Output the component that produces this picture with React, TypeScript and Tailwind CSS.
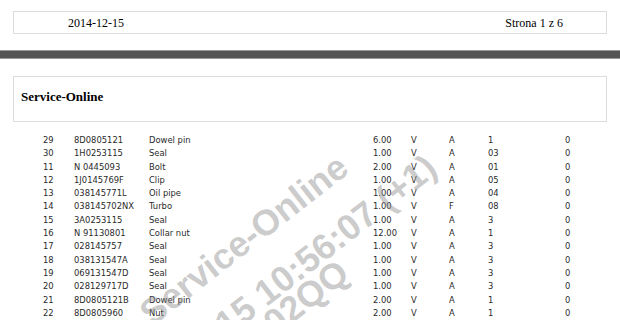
const rows = [
  ['29', '8D0805121', 'Dowel pin', '6.00', 'V', 'A', '1', '0'],
  ['30', '1H0253115', 'Seal', '1.00', 'V', 'A', '03', '0'],
  ['11', 'N 0445093', 'Bolt', '2.00', 'V', 'A', '01', '0'],
  ['12', '1J0145769F', 'Clip', '1.00', 'V', 'A', '05', '0'],
  ['13', '038145771L', 'Oil pipe', '1.00', 'V', 'A', '04', '0'],
  ['14', '038145702NX', 'Turbo', '1.00', 'V', 'F', '08', '0'],
  ['15', '3A0253115', 'Seal', '1.00', 'V', 'A', '3', '0'],
  ['16', 'N 91130801', 'Collar nut', '12.00', 'V', 'A', '1', '0'],
  ['17', '028145757', 'Seal', '1.00', 'V', 'A', '3', '0'],
  ['18', '038131547A', 'Seal', '1.00', 'V', 'A', '3', '0'],
  ['19', '069131547D', 'Seal', '1.00', 'V', 'A', '3', '0'],
  ['20', '028129717D', 'Seal', '1.00', 'V', 'A', '3', '0'],
  ['21', '8D0805121B', 'Dowel pin', '2.00', 'V', 'A', '1', '0'],
  ['22', '8D0805960', 'Nut', '2.00', 'V', 'A', '1', '0'],
]

// diagonal "Service-Online" stamp laid over the listing
function Watermark() {
  const line =
    'absolute whitespace-nowrap font-["Liberation_Sans",Arial,sans-serif] text-[36px] font-bold leading-none text-[rgba(140,140,140,0.45)] -translate-x-1/2 -translate-y-1/2 -rotate-[38deg]'
  return (
    <div className="pointer-events-none absolute inset-0 overflow-hidden">
      <div className={line} style={{ left: 244, top: 240 }}>Service-Online</div>
      <div className={line} style={{ left: 269, top: 290 }}>2014-12-15 10:56:07 (+1)</div>
      <div className={line} style={{ left: 280, top: 318 }}>PL002QQ</div>
    </div>
  )
}

export default function App() {
  return (
    <div className="relative h-[320px] w-[620px] overflow-hidden bg-white">
      <div className="px-[13px] pt-[11px]">
        <div className="flex h-[23px] items-center justify-between border border-[#dcdcdc] pl-[54px] pr-[43px] font-['Liberation_Serif',serif] text-[12px] text-black">
          <span>2014-12-15</span>
          <span>Strona 1 z 6</span>
        </div>
      </div>

      <div className="mt-[16px] h-[9px] border-y border-[#9a9a9a] bg-[#555555]" />

      <div className="px-[13px] pt-[17px]">
        <div className="h-[46px] border border-[#dcdcdc] pl-[7px] pt-[10px] font-['Liberation_Serif',serif] text-[13px] font-bold text-black">
          Service-Online
        </div>
      </div>

      <div className="mt-[12px] pl-[43px] font-['DejaVu_Sans',Verdana,sans-serif] text-[8.4px] leading-[13.3px] text-[#2a2a2a]">
        {rows.map((r) => (
          <div key={r[0] + r[1]} className="grid grid-cols-[31px_75px_224px_38px_38px_39px_77px_40px] whitespace-nowrap">
            {r.map((c, i) => (
              <span key={i}>{c}</span>
            ))}
          </div>
        ))}
      </div>

      <Watermark />
    </div>
  )
}
